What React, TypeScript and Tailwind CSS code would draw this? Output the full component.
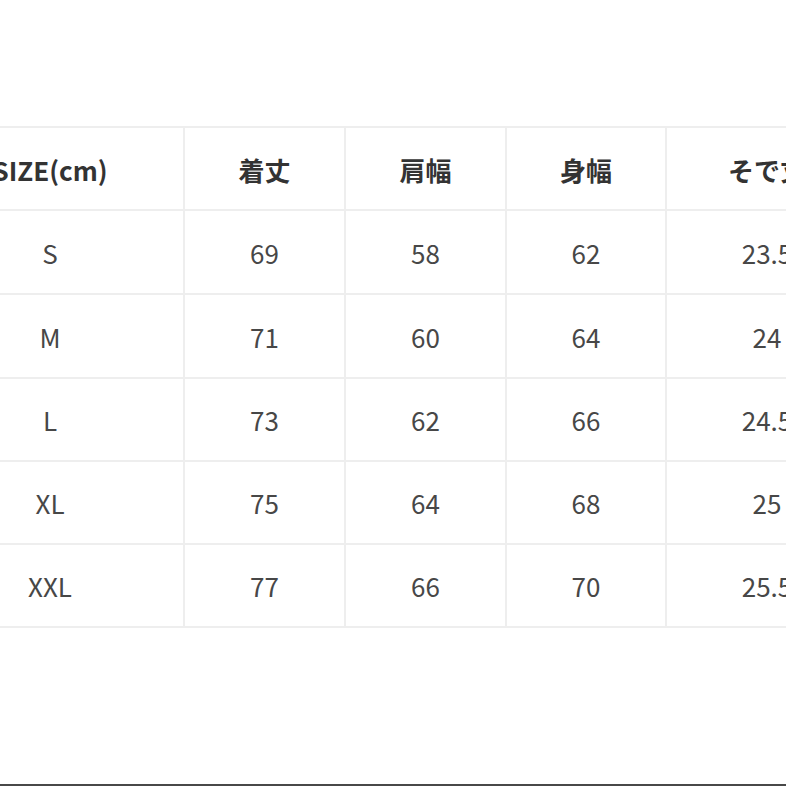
const headers = ["SIZE(cm)", "着丈", "肩幅", "身幅", "そで丈"];

const rows = [
  { size: "S", values: ["69", "58", "62", "23.5"], h: "h-[84px]" },
  { size: "M", values: ["71", "60", "64", "24"], h: "h-[84px]" },
  { size: "L", values: ["73", "62", "66", "24.5"], h: "h-[83px]" },
  { size: "XL", values: ["75", "64", "68", "25"], h: "h-[83px]" },
  { size: "XXL", values: ["77", "66", "70", "25.5"], h: "h-[83px]" },
];

const widths = ["w-[268px]", "w-[161px]", "w-[161px]", "w-[160px]", "w-[202px]"];

export default function App() {
  return (
    <div
      className="relative h-[786px] w-[786px] overflow-hidden bg-white"
      style={{ fontFamily: '"Noto Sans CJK JP", "Noto Sans", sans-serif' }}
    >
      <div className="ml-[-83px] mt-[126px] w-max border-t-2 border-[#eeeeee]">
        <div className="flex h-[83px]">
          {headers.map((h, i) => (
            <div
              key={h}
              className={`${widths[i]} flex shrink-0 items-center justify-center border-b-2 border-r-2 border-[#eeeeee] pt-0.5 text-[26px] font-bold text-[#333333]`}
            >
              {h}
            </div>
          ))}
        </div>
        {rows.map((r) => (
          <div key={r.size} className={`flex ${r.h}`}>
            {[r.size, ...r.values].map((v, i) => (
              <div
                key={i}
                className={`${widths[i]} flex shrink-0 items-center justify-center border-b-2 border-r-2 border-[#eeeeee] text-[26px] text-[#474747]`}
              >
                {v}
              </div>
            ))}
          </div>
        ))}
      </div>
      <div className="absolute bottom-0 left-0 h-[2px] w-full bg-[#484848]" />
    </div>
  );
}
